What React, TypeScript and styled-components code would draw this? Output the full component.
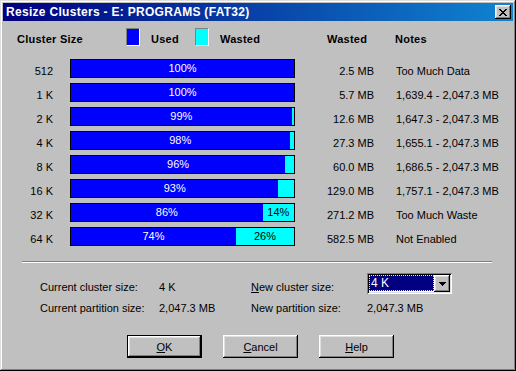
import React from "react";
import styled, { createGlobalStyle } from "styled-components";

const GlobalStyle = createGlobalStyle`
  html, body { margin: 0; padding: 0; background: #c0c0c0; }
  body {
    font-family: "Liberation Sans", Arial, sans-serif;
    font-size: 11px;
    color: #000;
  }
  * { box-sizing: border-box; }
`;

const raised = `
  box-shadow: inset -1px -1px #000, inset 1px 1px #fff, inset -2px -2px #808080, inset 2px 2px #dfdfdf;
`;

const Window = styled.div`
  width: 516px;
  height: 371px;
  padding: 3px;
  background: #c0c0c0;
  box-shadow: inset -1px -1px #000, inset 1px 1px #dfdfdf, inset -2px -2px #808080, inset 2px 2px #fff;
  display: flex;
  flex-direction: column;
`;

const TitleBar = styled.div`
  height: 18px;
  flex: none;
  display: flex;
  align-items: center;
  justify-content: space-between;
  padding: 0 2px 0 3px;
  background: linear-gradient(90deg, #000080, #1084d0);
  color: #fff;
  font-weight: bold;
  font-size: 12px;
  letter-spacing: 0.3px;
`;

const CloseButton = styled.div`
  width: 16px;
  height: 14px;
  background: #c0c0c0;
  ${raised}
  display: flex;
  align-items: center;
  justify-content: center;
  padding-right: 1px;
`;

const Content = styled.div`
  display: flex;
  flex-direction: column;
  padding-left: 14px;
`;

const columns = `
  display: grid;
  grid-template-columns: 53px 225px 79px 1fr;
`;

const HeaderRow = styled.div`
  ${columns}
  margin-top: 7px;
  height: 18px;
  align-items: end;
  font-weight: bold;
  line-height: 13px;
  margin-bottom: 13px;
`;

const HeaderLead = styled.div`
  grid-column: span 2;
  display: flex;
  align-items: flex-end;
  height: 18px;
`;

const LeadTitle = styled.span`
  width: 109px;
  letter-spacing: 0.25px;
`;

const LegendItem = styled.div<{ $w?: number }>`
  display: flex;
  align-items: flex-end;
  gap: 11px;
  width: ${(p) => (p.$w ? `${p.$w}px` : "auto")};
  letter-spacing: 0.25px;
`;

const Swatch = styled.span<{ $color: string }>`
  width: 14px;
  height: 18px;
  border: 1px solid;
  border-color: #808080 #fff #fff #808080;
  background: ${(p) => p.$color};
`;

const HeadCell = styled.div<{ $pad: number }>`
  padding-left: ${(p) => p.$pad}px;
  letter-spacing: 0.25px;
`;

const BarRow = styled.div`
  ${columns}
  height: 24px;
  align-items: start;
  line-height: 13px;
`;

const SizeCell = styled.div`
  padding-top: 6px;
  padding-right: 17px;
  text-align: right;
`;

const Bar = styled.div`
  height: 19px;
  border: 1px solid #000;
  display: flex;
  background: #00ffff;
`;

const UsedPart = styled.div`
  background: #0000ff;
  color: #fff;
  display: flex;
  align-items: center;
  justify-content: center;
  white-space: nowrap;
`;

const WastedPart = styled.div`
  flex: 1;
  display: flex;
  align-items: center;
  justify-content: center;
  white-space: nowrap;
  overflow: hidden;
`;

const ValueCell = styled.div`
  padding-top: 6px;
  text-align: right;
`;

const NoteCell = styled.div`
  padding-top: 6px;
  padding-left: 22px;
  white-space: nowrap;
`;

const Separator = styled.div`
  margin: 10px 0 0 5px;
  width: 470px;
  height: 2px;
  border-top: 1px solid #808080;
  border-bottom: 1px solid #fff;
`;

const InfoGrid = styled.div`
  margin: 10px 0 0 23px;
  display: grid;
  grid-template-columns: 119px 92px 116px 85px;
  grid-auto-rows: 21px;
  line-height: 13px;
`;

const InfoCell = styled.div`
  padding-top: 8px;
  white-space: nowrap;
`;

const Select = styled.div`
  width: 85px;
  height: 21px;
  padding: 2px;
  background: #fff;
  box-shadow: inset 1px 1px #808080, inset -1px -1px #fff, inset 2px 2px #000, inset -2px -2px #dfdfdf;
  display: flex;
`;

const SelectValue = styled.div`
  flex: 1;
  background: #000080;
  color: #fff;
  border: 1px dotted #ffff00;
  padding-left: 1px;
  line-height: 14px;
  margin-bottom: 1px;
  font-size: 12px;
`;

const DropButton = styled.div`
  width: 16px;
  background: #c0c0c0;
  ${raised}
  display: flex;
  align-items: center;
  justify-content: center;
`;

const ButtonRow = styled.div`
  display: flex;
  gap: 21px;
  margin-top: 20px;
  padding-left: 110px;
`;

const Button = styled.div<{ $default?: boolean }>`
  width: 75px;
  height: 23px;
  background: #c0c0c0;
  display: flex;
  align-items: center;
  justify-content: center;
  border: ${(p) => (p.$default ? "1px solid #000" : "none")};
  ${raised}
`;

type Row = { size: string; used: number; wasted: string; note: string };

const rows: Row[] = [
  { size: "512", used: 100, wasted: "2.5 MB", note: "Too Much Data" },
  { size: "1 K", used: 100, wasted: "5.7 MB", note: "1,639.4 - 2,047.3 MB" },
  { size: "2 K", used: 99, wasted: "12.6 MB", note: "1,647.3 - 2,047.3 MB" },
  { size: "4 K", used: 98, wasted: "27.3 MB", note: "1,655.1 - 2,047.3 MB" },
  { size: "8 K", used: 96, wasted: "60.0 MB", note: "1,686.5 - 2,047.3 MB" },
  { size: "16 K", used: 93, wasted: "129.0 MB", note: "1,757.1 - 2,047.3 MB" },
  { size: "32 K", used: 86, wasted: "271.2 MB", note: "Too Much Waste" },
  { size: "64 K", used: 74, wasted: "582.5 MB", note: "Not Enabled" },
];

const CloseGlyph = () => (
  <svg width="8" height="7" viewBox="0 0 8 7" shapeRendering="crispEdges">
    <path
      d="M0 0h2v1h-2zM6 0h2v1h-2zM1 1h2v1h-2zM5 1h2v1h-2zM2 2h4v1h-4zM3 3h2v1h-2zM2 4h4v1h-4zM1 5h2v1h-2zM5 5h2v1h-2zM0 6h2v1h-2zM6 6h2v1h-2z"
      fill="#000"
    />
  </svg>
);

const ArrowGlyph = () => (
  <svg width="7" height="4" viewBox="0 0 7 4" shapeRendering="crispEdges">
    <path d="M0 0h7v1h-7zM1 1h5v1h-5zM2 2h3v1h-3zM3 3h1v1h-1z" fill="#000" />
  </svg>
);

export default function App() {
  return (
    <>
      <GlobalStyle />
      <Window>
        <TitleBar>
          <span>Resize Clusters - E: PROGRAMS (FAT32)</span>
          <CloseButton>
            <CloseGlyph />
          </CloseButton>
        </TitleBar>
        <Content>
          <HeaderRow>
            <HeaderLead>
              <LeadTitle>Cluster Size</LeadTitle>
              <LegendItem $w={69}>
                <Swatch $color="#0000ff" />
                <span>Used</span>
              </LegendItem>
              <LegendItem>
                <Swatch $color="#00ffff" />
                <span>Wasted</span>
              </LegendItem>
            </HeaderLead>
            <HeadCell $pad={32}>Wasted</HeadCell>
            <HeadCell $pad={21}>Notes</HeadCell>
          </HeaderRow>
          {rows.map((r) => {
            const waste = 100 - r.used;
            return (
              <BarRow key={r.size}>
                <SizeCell>{r.size}</SizeCell>
                <Bar>
                  <UsedPart style={{ width: `${r.used}%` }}>{r.used}%</UsedPart>
                  {waste > 0 && <WastedPart>{waste >= 10 ? `${waste}%` : ""}</WastedPart>}
                </Bar>
                <ValueCell>{r.wasted}</ValueCell>
                <NoteCell>{r.note}</NoteCell>
              </BarRow>
            );
          })}
          <Separator />
          <InfoGrid>
            <InfoCell>Current cluster size:</InfoCell>
            <InfoCell>4 K</InfoCell>
            <InfoCell>
              <u>N</u>ew cluster size:
            </InfoCell>
            <Select>
              <SelectValue>4 K</SelectValue>
              <DropButton>
                <ArrowGlyph />
              </DropButton>
            </Select>
            <InfoCell>Current partition size:</InfoCell>
            <InfoCell>2,047.3 MB</InfoCell>
            <InfoCell>New partition size:</InfoCell>
            <InfoCell>2,047.3 MB</InfoCell>
          </InfoGrid>
          <ButtonRow>
            <Button $default>
              <span>
                <u>O</u>K
              </span>
            </Button>
            <Button>
              <span>
                <u>C</u>ancel
              </span>
            </Button>
            <Button>
              <span>
                <u>H</u>elp
              </span>
            </Button>
          </ButtonRow>
        </Content>
      </Window>
    </>
  );
}
